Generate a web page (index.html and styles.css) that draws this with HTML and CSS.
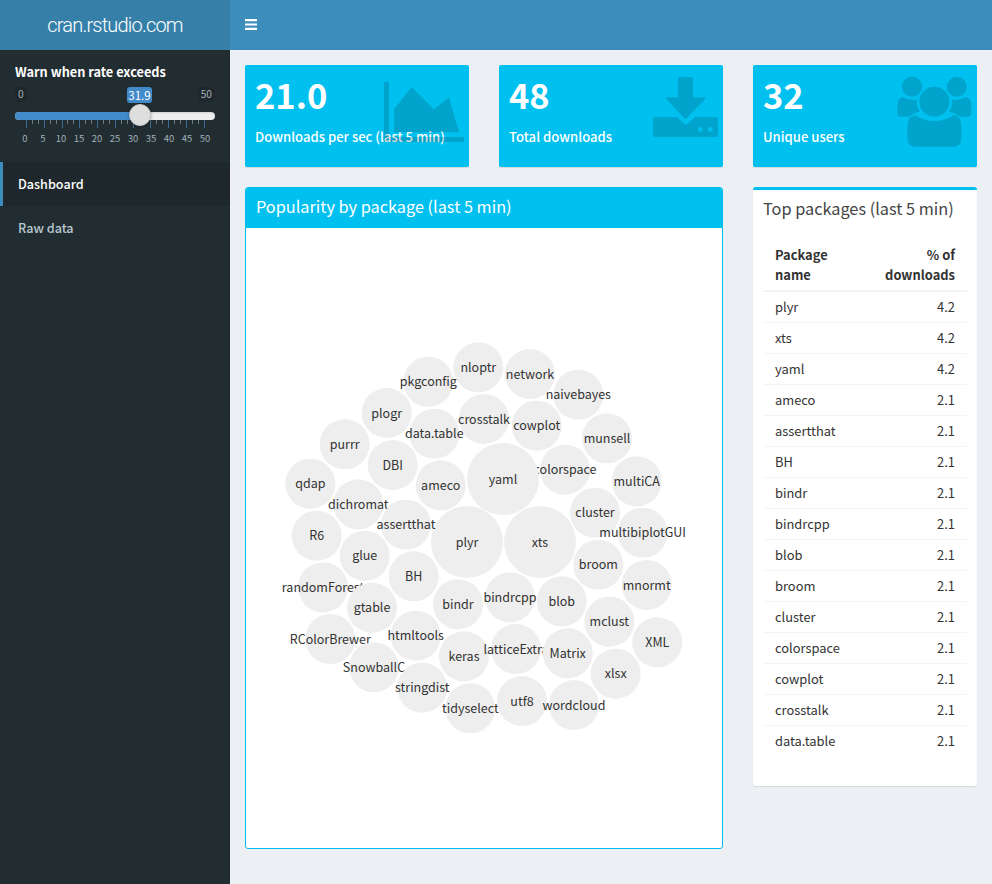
FILE: index.html
```html
<!DOCTYPE html>
<html lang="en">
<head>
<meta charset="utf-8">
<title>cran.rstudio.com</title>
<link rel="stylesheet" href="styles.css">
</head>
<body>
<div class="app">
  <aside class="sidebar">
    <div class="logo">cran.rstudio.com</div>
    <div class="slider-group">
      <label class="slider-label">Warn when rate exceeds</label>
      <div class="slider">
        <span class="edge edge-min">0</span>
        <span class="edge edge-max">50</span>
        <span class="current">31.9</span>
        <div class="track"><div class="fill"></div></div>
        <div class="ticks">
          <i class="major"></i><i></i><i></i>
          <i class="major"></i><i></i><i></i>
          <i class="major"></i><i></i><i></i>
          <i class="major"></i><i></i><i></i>
          <i class="major"></i><i></i><i></i>
          <i class="major"></i><i></i><i></i>
          <i class="major"></i><i></i><i></i>
          <i class="major"></i><i></i><i></i>
          <i class="major"></i><i></i><i></i>
          <i class="major"></i><i></i><i></i>
          <i class="major"></i>
        </div>
        <div class="knob"></div>
        <div class="tick-labels">
          <span>0</span><span>5</span><span>10</span><span>15</span><span>20</span><span>25</span><span>30</span><span>35</span><span>40</span><span>45</span><span>50</span>
        </div>
      </div>
    </div>
    <nav class="menu">
      <a class="menu-item active">Dashboard</a>
      <a class="menu-item">Raw data</a>
    </nav>
  </aside>
  <div class="main">
    <header class="navbar">
      <svg class="burger" viewBox="0 0 12 11" width="12" height="11"><path d="M0 0h12v2.200H0zM0 4.400h12v2.200H0zM0 8.800h12V11H0z" fill="#fff"/></svg>
    </header>
    <main class="content">
      <section class="value-box">
        <div class="value">21.0</div>
        <div class="caption">Downloads per sec (last 5 min)</div>
        <svg class="box-icon" viewBox="0 0 100 102" width="100" height="102">
          <path d="M15 17h5v55h75v5H15z"/>
          <path d="M25 44.300L42.700 22L65 44.300L80 32.300L90 67.300H25z"/>
        </svg>
      </section>
      <section class="value-box">
        <div class="value">48</div>
        <div class="caption">Total downloads</div>
        <svg class="box-icon" viewBox="0 0 100 102" width="100" height="102">
          <path d="M57 12h11a2 2 0 0 1 2 2v18.300h11q2.500 0 1 2L63.500 53.500q-1 1-2 0L43.500 34.300q-1.500-2 1-2H55V14a2 2 0 0 1 2-2z"/>
          <path fill-rule="evenodd" d="M32 52h21.700l7.500 6.500q1.800 1.500 3.600 0L72.300 52H93a2 2 0 0 1 2 2v16a2 2 0 0 1-2 2H32a2 2 0 0 1-2-2V54a2 2 0 0 1 2-2zM77.300 61.900a2.400 2.400 0 1 0 .01 0zM87.300 61.900a2.400 2.400 0 1 0 .01 0z"/>
        </svg>
      </section>
      <section class="value-box">
        <div class="value">32</div>
        <div class="caption">Unique users</div>
        <svg class="box-icon" viewBox="877 65 100 102" width="100" height="102">
          <circle cx="912" cy="86.700" r="10"/>
          <circle cx="956.800" cy="86.700" r="10"/>
          <circle cx="934.400" cy="101.700" r="15"/>
          <path d="M916 146.700Q907.300 146.700 907.300 138V128Q907.300 116 915 115Q924 121 934.400 121Q945 121 954 115Q961.500 116 961.500 128V138Q961.500 146.700 953 146.700Z"/>
          <path d="M901 116.700Q897.300 116.700 897.300 112V106Q897.300 98 903 97Q910 101 917 99.500A17.700 17.700 0 0 0 919.800 111.700Q913 113 909.500 116.700Z"/>
          <path d="M967.800 116.700Q971.500 116.700 971.500 112V106Q971.500 98 965.800 97Q958.800 101 951.800 99.500A17.700 17.700 0 0 1 949 111.700Q955.800 113 959.300 116.700Z"/>
        </svg>
      </section>
      <section class="bubble-box">
        <h3 class="bubble-title">Popularity by package (last 5 min)</h3>
        <svg class="bubbles" viewBox="246 228 476 620" width="476" height="620">
          <g><circle cx="578.300" cy="394.700" r="25"/><text x="578.300" y="394.700">naivebayes</text></g>
          <g><circle cx="530" cy="374" r="25"/><text x="530" y="374">network</text></g>
          <g><circle cx="565" cy="469.700" r="25"/><text x="565" y="469.700">colorspace</text></g>
          <g><circle cx="503" cy="479" r="36"/><text x="503" y="479">yaml</text></g>
          <g><circle cx="467" cy="542" r="36"/><text x="467" y="542">plyr</text></g>
          <g><circle cx="540" cy="542" r="36"/><text x="540" y="542">xts</text></g>
          <g><circle cx="428.300" cy="381.700" r="25"/><text x="428.300" y="381.700">pkgconfig</text></g>
          <g><circle cx="478.300" cy="367.300" r="25"/><text x="478.300" y="367.300">nloptr</text></g>
          <g><circle cx="386.700" cy="413" r="25"/><text x="386.700" y="413">plogr</text></g>
          <g><circle cx="434.300" cy="433.700" r="25"/><text x="434.300" y="433.700">data.table</text></g>
          <g><circle cx="344.700" cy="444.300" r="25"/><text x="344.700" y="444.300">purrr</text></g>
          <g><circle cx="392.700" cy="465" r="25"/><text x="392.700" y="465">DBI</text></g>
          <g><circle cx="310.300" cy="483.700" r="25"/><text x="310.300" y="483.700">qdap</text></g>
          <g><circle cx="358.300" cy="504.300" r="25"/><text x="358.300" y="504.300">dichromat</text></g>
          <g><circle cx="440.700" cy="485.300" r="25"/><text x="440.700" y="485.300">ameco</text></g>
          <g><circle cx="316.700" cy="535.700" r="25"/><text x="316.700" y="535.700">R6</text></g>
          <g><circle cx="406" cy="524.700" r="25"/><text x="406" y="524.700">assertthat</text></g>
          <g><circle cx="484" cy="419" r="25"/><text x="484" y="419">crosstalk</text></g>
          <g><circle cx="536.700" cy="425.700" r="25"/><text x="536.700" y="425.700">cowplot</text></g>
          <g><circle cx="607" cy="438.300" r="25"/><text x="607" y="438.300">munsell</text></g>
          <g><circle cx="636.700" cy="481.300" r="25"/><text x="636.700" y="481.300">multiCA</text></g>
          <g><circle cx="595" cy="512.700" r="25"/><text x="595" y="512.700">cluster</text></g>
          <g><circle cx="642.700" cy="532.700" r="25"/><text x="642.700" y="532.700">multibiplotGUI</text></g>
          <g><circle cx="364.700" cy="555.700" r="25"/><text x="364.700" y="555.700">glue</text></g>
          <g><circle cx="413.700" cy="576.300" r="25"/><text x="413.700" y="576.300">BH</text></g>
          <g><circle cx="323" cy="587.300" r="25"/><text x="323" y="587.300">randomForest</text></g>
          <g><circle cx="372" cy="607.700" r="25"/><text x="372" y="607.700">gtable</text></g>
          <g><circle cx="458" cy="604.300" r="25"/><text x="458" y="604.300">bindr</text></g>
          <g><circle cx="415.700" cy="635.700" r="25"/><text x="415.700" y="635.700">htmltools</text></g>
          <g><circle cx="330.300" cy="639" r="25"/><text x="330.300" y="639">RColorBrewer</text></g>
          <g><circle cx="464" cy="656.300" r="25"/><text x="464" y="656.300">keras</text></g>
          <g><circle cx="374" cy="667.300" r="25"/><text x="374" y="667.300">SnowballC</text></g>
          <g><circle cx="422.300" cy="687.700" r="25"/><text x="422.300" y="687.700">stringdist</text></g>
          <g><circle cx="470.300" cy="708.300" r="25"/><text x="470.300" y="708.300">tidyselect</text></g>
          <g><circle cx="598.300" cy="564.700" r="25"/><text x="598.300" y="564.700">broom</text></g>
          <g><circle cx="646.700" cy="585" r="25"/><text x="646.700" y="585">mnormt</text></g>
          <g><circle cx="510" cy="597.300" r="25"/><text x="510" y="597.300">bindrcpp</text></g>
          <g><circle cx="561.700" cy="601.300" r="25"/><text x="561.700" y="601.300">blob</text></g>
          <g><circle cx="609.300" cy="621.700" r="25"/><text x="609.300" y="621.700">mclust</text></g>
          <g><circle cx="657.300" cy="642.300" r="25"/><text x="657.300" y="642.300">XML</text></g>
          <g><circle cx="516" cy="649" r="25"/><text x="516" y="649">latticeExtra</text></g>
          <g><circle cx="567.700" cy="653.300" r="25"/><text x="567.700" y="653.300">Matrix</text></g>
          <g><circle cx="615.700" cy="673.700" r="25"/><text x="615.700" y="673.700">xlsx</text></g>
          <g><circle cx="522" cy="701" r="25"/><text x="522" y="701">utf8</text></g>
          <g><circle cx="574" cy="705" r="25"/><text x="574" y="705">wordcloud</text></g>
        </svg>
      </section>
      <section class="table-box">
        <h3 class="table-title">Top packages (last 5 min)</h3>
        <table class="packages">
          <thead><tr><th>Package<br>name</th><th class="num">% of<br>downloads</th></tr></thead>
          <tbody>
            <tr><td>plyr</td><td class="num">4.2</td></tr>
            <tr><td>xts</td><td class="num">4.2</td></tr>
            <tr><td>yaml</td><td class="num">4.2</td></tr>
            <tr><td>ameco</td><td class="num">2.1</td></tr>
            <tr><td>assertthat</td><td class="num">2.1</td></tr>
            <tr><td>BH</td><td class="num">2.1</td></tr>
            <tr><td>bindr</td><td class="num">2.1</td></tr>
            <tr><td>bindrcpp</td><td class="num">2.1</td></tr>
            <tr><td>blob</td><td class="num">2.1</td></tr>
            <tr><td>broom</td><td class="num">2.1</td></tr>
            <tr><td>cluster</td><td class="num">2.1</td></tr>
            <tr><td>colorspace</td><td class="num">2.1</td></tr>
            <tr><td>cowplot</td><td class="num">2.1</td></tr>
            <tr><td>crosstalk</td><td class="num">2.1</td></tr>
            <tr><td>data.table</td><td class="num">2.1</td></tr>
          </tbody>
        </table>
      </section>
    </main>
  </div>
</div>
</body>
</html>
```
FILE: styles.css
```css
* { box-sizing: border-box; }
html, body { margin: 0; height: 100%; }
body {
  font-family: "Noto Sans CJK SC", "Source Sans Pro", "Open Sans", sans-serif;
  font-size: 12.9px;
  line-height: 20px;
  color: #333;
  background: #ecf0f5;
  overflow: hidden;
}
.app { display: flex; height: 884px; }

/* Sidebar */
.sidebar { width: 230px; flex: none; background: #222d32; }
.logo {
  height: 50px;
  background: #367fa9;
  color: #fff;
  font-family: "Roboto", "Liberation Sans", sans-serif;
  font-weight: 300;
  font-size: 20px;
  letter-spacing: -.8px;
  line-height: 50px;
  text-align: center;
}
.slider-group { padding: 12px 15px 0; height: 112px; }
.slider-label { display: block; color: #fff; font-weight: 700; font-size: 12.75px; line-height: 20px; }
.slider { position: relative; height: 70px; margin-top: 2px; }
.edge {
  position: absolute; top: 3px; height: 15px; padding: 0 3px;
  font-size: 10.200px; line-height: 14px; color: #a5aeb3;
  background: rgba(0,0,0,.1); border-radius: 3px;
}
.edge-min { left: 0; }
.edge-max { right: 0; }
.current {
  position: absolute; left: 112px; top: 3px; width: 25px; height: 16px;
  font-size: 11.500px; line-height: 16px; text-align: center; color: #fff;
  background: #428bca; border-radius: 3px;
}
.track { position: absolute; left: 0; right: 0; top: 28px; height: 8px; background: #eee; border-radius: 4px; overflow: hidden; box-shadow: inset 0 1px 2px rgba(0,0,0,.12); }
.fill { width: 125px; height: 100%; background: #428bca; }
.knob {
  position: absolute; left: 114px; top: 20px; width: 22px; height: 22px;
  border-radius: 50%; background: #dedede; border: 1px solid #ccc;
  box-shadow: 0 0 3px rgba(0,0,0,.4);
}
.ticks { position: absolute; left: 11px; top: 36px; width: 179px; height: 8px; display: flex; justify-content: space-between; align-items: flex-start; }
.ticks i { display: block; width: 1px; height: 4px; background: #6d7a82; }
.ticks i.major { height: 8px; background: #3a6a96; }
.tick-labels { position: absolute; left: 1px; top: 47px; width: 198px; display: flex; justify-content: space-between; }
.tick-labels span { width: 20px; text-align: center; font-size: 9.500px; line-height: 14px; color: #9fb0b9; }
.menu { display: flex; flex-direction: column; }
.menu-item { height: 44px; padding-left: 18px; line-height: 44px; font-weight: 500; font-size: 12.6px; color: #b8c7ce; }
.menu-item.active { background: #1e282c; color: #fff; border-left: 3px solid #3c8dbc; padding-left: 15px; }

/* Main */
.main { flex: 1; min-width: 0; }
.navbar { height: 50px; background: #3c8dbc; padding: 19px 15px 0; }
.burger { display: block; }
.content {
  display: grid;
  grid-template-columns: 224px 224px 224px;
  grid-template-rows: 102px auto;
  column-gap: 30px;
  row-gap: 20px;
  padding: 15px;
  align-items: start;
}
.value-box {
  position: relative; height: 102px; padding: 10px;
  background: #00c0ef; color: #fff; border-radius: 2px;
  box-shadow: 0 1px 1px rgba(0,0,0,.1);
  overflow: hidden;
}
.value { font-size: 34.500px; font-weight: 700; line-height: 42px; margin-top: -2px; margin-bottom: 12px; }
.caption { font-size: 13.100px; line-height: 20px; font-weight: 500; white-space: nowrap; margin-top: 1px; }
.box-icon { position: absolute; top: 0; right: 0; fill: rgba(0,0,0,.15); }

.bubble-box {
  grid-column: 1 / span 2;
  height: 662px;
  background: #fff;
  border: 1px solid #00c0ef;
  border-radius: 3px;
  overflow: hidden;
}
.bubble-title {
  margin: 0; height: 40px; padding: 0 10px;
  background: #00c0ef; color: #fff;
  font-size: 16.300px; font-weight: 400; line-height: 36px;
}
.bubbles { display: block; }
.bubbles circle { fill: #eee; }
.bubbles text { fill: #333; font-size: 12.500px; text-anchor: middle; dominant-baseline: central; transform: translateY(-1px); }

.table-box {
  height: 599px;
  background: #fff;
  border-top: 3px solid #00c0ef;
  border-radius: 3px;
  box-shadow: 0 1px 1px rgba(0,0,0,.1);
  padding: 10px;
}
.table-title { margin: -1px 0 0; font-size: 16.300px; font-weight: 400; line-height: 18px; color: #444; }
.packages { width: 100%; margin-top: 28px; border-collapse: collapse; }
.packages th { padding: 0 12px 5px; text-align: left; font-weight: 700; line-height: 20px; border-bottom: 2px solid #f4f4f4; }
.packages td { height: 31px; padding: 0 12px; border-top: 1px solid #f4f4f4; line-height: 20px; }
.packages tbody tr:first-child td { border-top: 0; }
.packages .num { text-align: right; }
```
